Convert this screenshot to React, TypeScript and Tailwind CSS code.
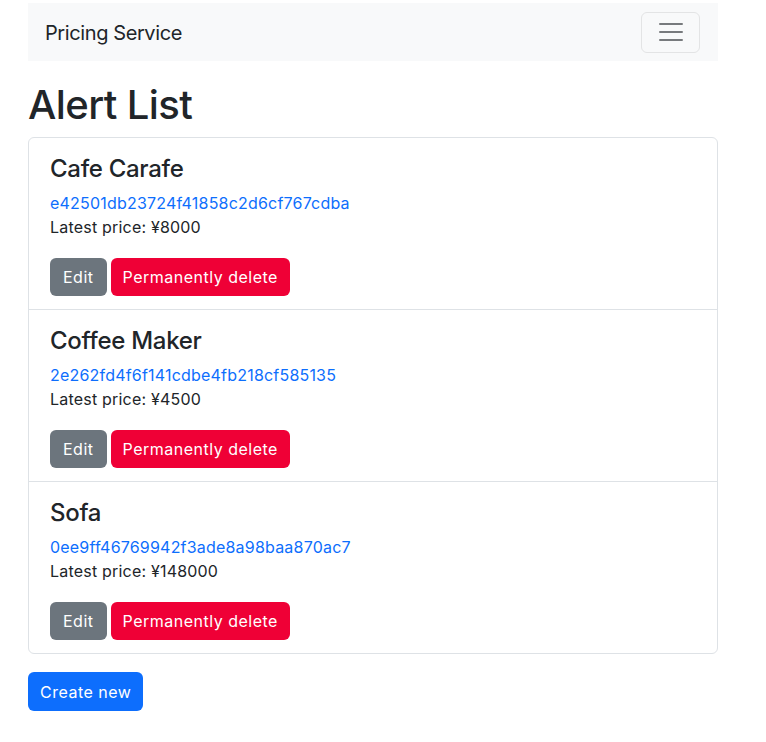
const alerts = [
  { name: 'Cafe Carafe', id: 'e42501db23724f41858c2d6cf767cdba', price: '8000' },
  { name: 'Coffee Maker', id: '2e262fd4f6f141cdbe4fb218cf585135', price: '4500' },
  { name: 'Sofa', id: '0ee9ff46769942f3ade8a98baa870ac7', price: '148000' },
];

function Toggler() {
  return (
    <button className="flex h-[41px] w-[59px] items-center justify-center rounded-[6px] border border-[#e3e4e5]">
      <svg width="30" height="30" viewBox="0 0 30 30">
        <path d="M4 7h22M4 15h22M4 23h22" stroke="rgba(33,37,41,0.6)" strokeWidth="2" strokeLinecap="round" />
      </svg>
    </button>
  );
}

export default function App() {
  return (
    <div className="min-h-[742px] bg-white pt-[3px] text-[#212529]" style={{ fontFamily: 'Inter, "Liberation Sans", Arial, sans-serif' }}>
      <div className="mx-[28px] w-[690px]">
        <nav className="flex h-[58px] items-center justify-between bg-[#f8f9fa] pl-[17px] pr-[18px]">
          <span className="mt-[2px] text-[20px] tracking-[-0.4px]">Pricing Service</span>
          <Toggler />
        </nav>

        <h1 className="mb-2 mt-5 text-[40px] font-medium leading-[48px] tracking-[-0.6px]">Alert List</h1>

        <ul className="rounded-[6px] border border-[#dee2e6]">
          {alerts.map((a, i) => (
            <li
              key={a.id}
              className={`px-[21px] pb-[13px] pt-[16px] ${i > 0 ? 'border-t border-[#dee2e6]' : ''}`}
            >
              <h4 className="mb-2 text-[24px] font-medium leading-[29px] tracking-[-0.3px]">{a.name}</h4>
              <a href="#" className="block text-[16px] leading-6 tracking-[0.2px] text-[#0d6efd]">
                {a.id}
              </a>
              <p className="text-[16px] leading-6 tracking-[0.2px]">Latest price: ¥{a.price}</p>
              <div className="mt-[19px] flex gap-1">
                <button className="h-[38px] rounded-[6px] bg-[#6c757d] px-[13px] text-[16px] tracking-[0.5px] text-white">Edit</button>
                <button className="h-[38px] rounded-[6px] bg-[#ef0036] px-3 text-[16px] tracking-[0.5px] text-white">
                  Permanently delete
                </button>
              </div>
            </li>
          ))}
        </ul>

        <button className="mt-[18px] h-[39px] rounded-[6px] bg-[#0d6efd] px-3 text-[16px] tracking-[0.5px] text-white">Create new</button>
      </div>
    </div>
  );
}
